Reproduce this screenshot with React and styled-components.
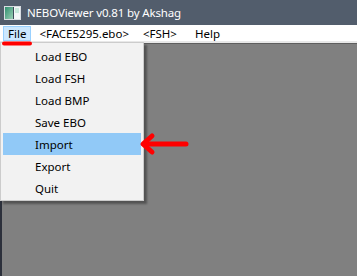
import React from "react";
import styled, { createGlobalStyle } from "styled-components";

const GlobalStyle = createGlobalStyle`
  html, body {
    margin: 0;
    padding: 0;
    background: #808080;
    font-family: "Noto Sans", "Open Sans", sans-serif;
  }
`;

const Window = styled.div`
  position: relative;
  width: 357px;
  height: 276px;
  display: flex;
  flex-direction: column;
  overflow: hidden;
`;

const TitleBar = styled.div`
  height: 25px;
  background: #525d6c;
  display: flex;
  align-items: center;
  gap: 6px;
  padding-left: 4px;
  color: #ffffff;
  font-size: 11.5px;
  flex-shrink: 0;
`;

const Title = styled.span`
  letter-spacing: -0.15px;
`;

const MenuBar = styled.div`
  height: 16px;
  background: #ffffff;
  display: flex;
  align-items: center;
  padding-left: 3px;
  border-bottom: 2px solid #e8e8e8;
  box-shadow: 0 1px 0 #5e5e5e;
  flex-shrink: 0;
  font-size: 11.5px;
  color: #000;
`;

const MenuTitle = styled.div`
  height: 15px;
  display: flex;
  align-items: center;
  padding: 0 ${(p) => p.$pad ?? 0}px;
  margin-right: ${(p) => p.$gap ?? 0}px;
  background: ${(p) => (p.$active ? "#cce8ff" : "transparent")};
  border: 1px solid ${(p) => (p.$active ? "#99d1ff" : "transparent")};
  box-sizing: border-box;
  white-space: nowrap;
`;

const Workspace = styled.div`
  flex: 1;
  background: #808080;
  border-left: 2px solid #2c303b;
  margin-top: 1px;
`;

const Dropdown = styled.div`
  position: absolute;
  left: 0;
  top: 42px;
  width: 144px;
  box-sizing: border-box;
  background: #f2f2f2;
  border: 1px solid #cccccc;
  padding: 2px 2px 1px;
  box-shadow: 3px 3px 2px rgba(0, 0, 0, 0.35);
  display: flex;
  flex-direction: column;
`;

const Item = styled.div`
  height: 22px;
  display: flex;
  align-items: center;
  padding-left: 32px;
  font-size: 11.5px;
  color: #000;
  background: ${(p) => (p.$hover ? "#91c9f7" : "transparent")};
`;

const Overlay = styled.svg`
  position: absolute;
  left: 0;
  top: 0;
  pointer-events: none;
`;

const AppIcon = () => (
  <svg width="17" height="14" viewBox="0 0 17 14">
    <defs>
      <linearGradient id="g" x1="0" y1="0" x2="1" y2="1">
        <stop offset="0" stopColor="#2f8f6f" />
        <stop offset="1" stopColor="#9ccfb6" />
      </linearGradient>
    </defs>
    <rect x="0" y="0" width="17" height="14" fill="#d8dde2" />
    <rect x="1" y="1" width="8" height="12" fill="url(#g)" />
    <rect x="9" y="1" width="1" height="12" fill="#3c4a5a" />
    <rect x="10" y="1" width="6" height="12" fill="#f4f6f8" />
    <rect x="11" y="2" width="4" height="5" fill="#c9e8dc" />
  </svg>
);

const items = ["Load EBO", "Load FSH", "Load BMP", "Save EBO", "Import", "Export", "Quit"];

const App = () => (
  <Window>
    <GlobalStyle />
    <TitleBar>
      <AppIcon />
      <Title>NEBOViewer v0.81 by Akshag</Title>
    </TitleBar>
    <MenuBar>
      <MenuTitle $active $pad={4} $gap={7}>File</MenuTitle>
      <MenuTitle $gap={12}>&lt;FACE5295.ebo&gt;</MenuTitle>
      <MenuTitle $gap={16}>&lt;FSH&gt;</MenuTitle>
      <MenuTitle>Help</MenuTitle>
    </MenuBar>
    <Workspace />
    <Dropdown>
      {items.map((label) => (
        <Item key={label} $hover={label === "Import"}>
          {label}
        </Item>
      ))}
    </Dropdown>
    <Overlay width="357" height="276">
      <line x1="4" y1="43.5" x2="30" y2="43.5" stroke="#ff0000" strokeWidth="4" strokeLinecap="round" />
      <line x1="144" y1="144" x2="186" y2="144" stroke="#ff0000" strokeWidth="5" strokeLinecap="round" />
      <polyline points="152,136 143,144 152,152" fill="none" stroke="#ff0000" strokeWidth="5" strokeLinecap="round" strokeLinejoin="round" />
    </Overlay>
  </Window>
);

export default App;
